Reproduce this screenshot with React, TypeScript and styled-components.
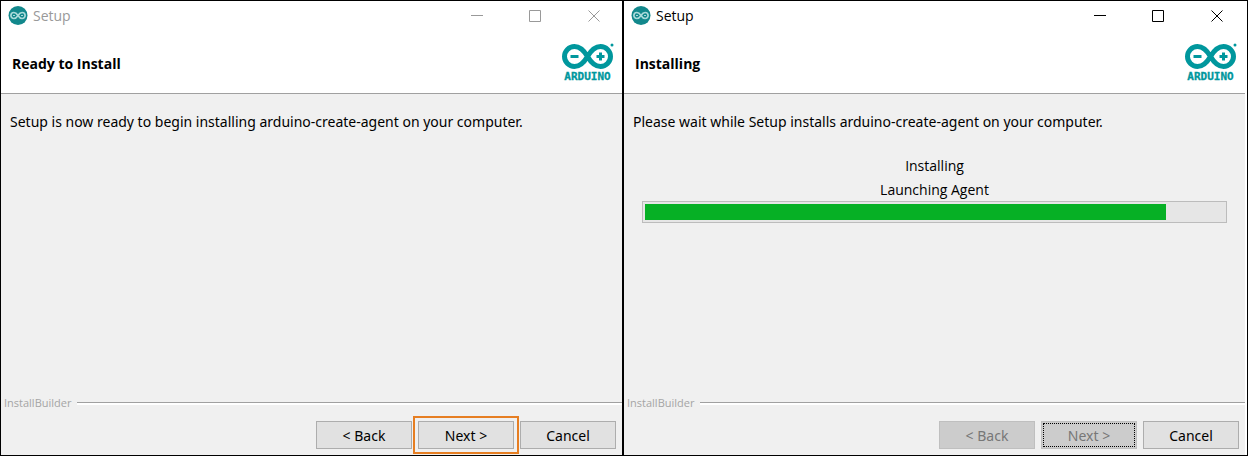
import React from "react";
import styled, { createGlobalStyle, css } from "styled-components";

const GlobalStyle = createGlobalStyle`
  * { box-sizing: border-box; }
  body {
    margin: 0;
    background: #f0f0f0;
    color: #000;
    font: 14px/20px "Open Sans", sans-serif;
  }
`;

const Desktop = styled.main`
  display: grid;
  grid-template-columns: minmax(0, 1fr) minmax(0, 1fr);
  min-height: 100vh;
  border: 1px solid #000;
`;

const Window = styled.section<{ $edge: string }>`
  display: flex;
  flex-direction: column;
  border-right: 2px solid ${(p) => p.$edge};
`;

const TitleBar = styled.header<{ $active: boolean }>`
  display: flex;
  align-items: center;
  height: 29px;
  padding-left: 7px;
  background: #fff;
  color: ${(p) => (p.$active ? "#000" : "#999")};
`;

const AppIcon = styled.svg`
  width: 20px;
  height: 20px;
  margin-right: 5px;
`;

const WindowName = styled.span`
  flex: 1;
`;

const Control = styled.button`
  display: flex;
  align-items: center;
  justify-content: center;
  width: 58px;
  height: 29px;
  padding: 0;
  border: 0;
  background: none;
  color: inherit;
`;

const Banner = styled.div`
  display: flex;
  align-items: flex-start;
  justify-content: space-between;
  height: 64px;
  padding: 12px 6px 0 11px;
  border-bottom: 1px solid #a0a0a0;
  background: #fff;
`;

const Heading = styled.h1`
  margin: 0;
  padding-top: 12px;
  font-size: 14px;
  line-height: 20px;
`;

const Content = styled.div`
  flex: 1;
  padding: 18px 9px;
`;

const Message = styled.p`
  margin: 0;
  font-family: "Noto Sans", sans-serif;
`;

const Status = styled.div`
  display: flex;
  flex-direction: column;
  gap: 4px;
  margin: 24px 9px 0;
  text-align: center;
`;

const Track = styled.div`
  height: 22px;
  margin-top: -3px;
  padding: 2px;
  border: 1px solid #bcbcbc;
  background: #e6e6e6;
`;

const Fill = styled.div`
  height: 100%;
  background: #06b025;
`;

const Divider = styled.div`
  display: flex;
  align-items: center;
  gap: 6px;
  padding-left: 3px;
  color: #a5a5a5;
  font-size: 11px;
  line-height: 16px;

  &::after {
    content: "";
    flex: 1;
    height: 2px;
    border-top: 1px solid #a0a0a0;
    background: #fff;
  }
`;

const Actions = styled.footer`
  display: flex;
  justify-content: flex-end;
  gap: 6px;
  padding: 10px 6px 6px;
`;

const Button = styled.button<{ $highlighted?: boolean; $focused?: boolean }>`
  width: 96px;
  height: 28px;
  padding: 2px 0 0;
  border: 1px solid #adadad;
  background: #e1e1e1;
  color: #000;
  font: inherit;
  font-family: "Noto Sans", sans-serif;

  &:disabled {
    border-color: #bfbfbf;
    background: #ccc;
    color: #777;
  }

  ${(p) =>
    p.$highlighted &&
    css`
      outline: 2px solid #e67e22;
      outline-offset: 3px;
    `}

  ${(p) =>
    p.$focused &&
    css`
      outline: 1px dotted #000;
      outline-offset: -3px;
    `}
`;

const TitleIcon = () => (
  <AppIcon viewBox="0 0 20 20" aria-hidden="true">
    <circle cx="10" cy="9.5" r="9.5" fill="#12888c" />
    <g fill="none" stroke="#a9dada" strokeWidth="1.7">
      <path d="M10 9.500C8.700 7.500 7.700 6.500 5.900 6.500a3 3 0 0 0 0 6C7.700 12.500 8.700 11.500 10 9.500S12.300 6.500 14.100 6.500a3 3 0 0 1 0 6C12.300 12.500 11.300 11.500 10 9.500Z" />
      <path d="M5 9.500h2M13 9.500h2" strokeWidth="1" />
    </g>
  </AppIcon>
);

const Logo = () => (
  <svg width="56" height="44" viewBox="0 0 56 44" role="img" aria-label="Arduino">
    <g fill="none" stroke="#00979d">
      <path
        d="M27.500 14.500C24 8.500 20.500 4.500 14.500 4.500a10 10 0 0 0 0 20C20.500 24.500 24 20.500 27.500 14.500S34.500 4.500 40.500 4.500a10 10 0 0 1 0 20C34.500 24.500 31 20.500 27.500 14.500Z"
        strokeWidth="5"
      />
      <path d="M10.500 14.500h8M36.500 14.500h8M40.500 10.500v8" strokeWidth="3" />
    </g>
    <circle cx="52" cy="3" r="1.500" fill="#00979d" />
    <text
      x="27.500"
      y="38"
      textAnchor="middle"
      fill="#00979d"
      stroke="#00979d"
      strokeWidth="0.300"
      fontFamily="DejaVu Sans Mono, monospace"
      fontWeight="700"
      fontSize="11"
    >
      ARDUINO
    </text>
  </svg>
);

const controls = [
  { label: "Minimize", width: 12, path: "M0 5.500h12" },
  { label: "Maximize", width: 12, path: "M.5 .5h11v11h-11z" },
  { label: "Close", width: 14, path: "M2.500 .5l11 11M13.500 .5l-11 11" },
];

type SetupProps = {
  title: string;
  message: string;
  active?: boolean;
  installing?: boolean;
  progress?: number;
};

const SetupWindow = ({ title, message, active = false, installing = false, progress = 0 }: SetupProps) => (
  <Window $edge={active ? "#fff" : "#000"}>
    <TitleBar $active={active}>
      <TitleIcon />
      <WindowName>Setup</WindowName>
      {controls.map(({ label, width, path }) => (
        <Control key={label} type="button" aria-label={label}>
          <svg width={width} height="12" viewBox={`0 0 ${width} 12`} fill="none" stroke="currentColor">
            <path d={path} />
          </svg>
        </Control>
      ))}
    </TitleBar>
    <Banner>
      <Heading>{title}</Heading>
      <Logo />
    </Banner>
    <Content>
      <Message>{message}</Message>
      {installing && (
        <Status>
          <span>Installing</span>
          <span>Launching Agent</span>
          <Track role="progressbar" aria-label="Installing" aria-valuenow={progress}>
            <Fill style={{ width: `${progress}%` }} />
          </Track>
        </Status>
      )}
    </Content>
    <Divider>InstallBuilder</Divider>
    <Actions>
      <Button type="button" disabled={installing}>&lt; Back</Button>
      <Button type="button" disabled={installing} $highlighted={!installing} $focused={installing}>
        Next &gt;
      </Button>
      <Button type="button">Cancel</Button>
    </Actions>
  </Window>
);

export default function App() {
  return (
    <>
      <GlobalStyle />
      <Desktop>
        <SetupWindow
          title="Ready to Install"
          message="Setup is now ready to begin installing arduino-create-agent on your computer."
        />
        <SetupWindow
          title="Installing"
          message="Please wait while Setup installs arduino-create-agent on your computer."
          active
          installing
          progress={90}
        />
      </Desktop>
    </>
  );
}
